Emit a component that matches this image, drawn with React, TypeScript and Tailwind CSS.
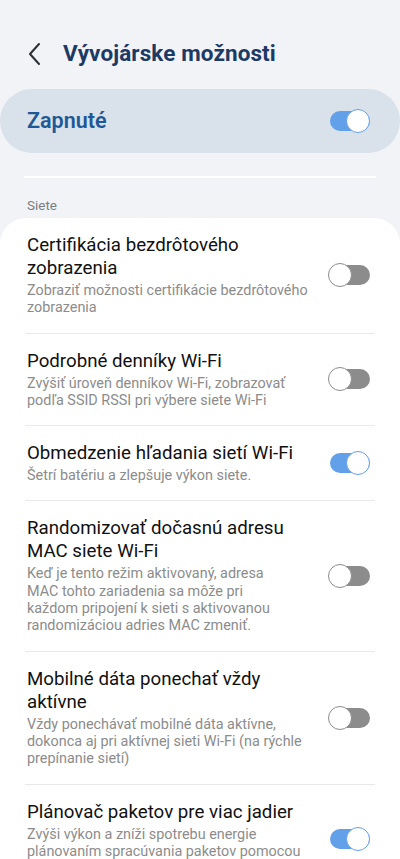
import React from "react";

type Item = { title: string; sub: string[]; on: boolean };

const items: Item[] = [
  {
    title: "Certifikácia bezdrôtového zobrazenia",
    sub: ["Zobraziť možnosti certifikácie bezdrôtového", "zobrazenia"],
    on: false,
  },
  {
    title: "Podrobné denníky Wi-Fi",
    sub: ["Zvýšiť úroveň denníkov Wi-Fi, zobrazovať", "podľa SSID RSSI pri výbere siete Wi-Fi"],
    on: false,
  },
  {
    title: "Obmedzenie hľadania sietí Wi-Fi",
    sub: ["Šetrí batériu a zlepšuje výkon siete."],
    on: true,
  },
  {
    title: "Randomizovať dočasnú adresu MAC siete Wi-Fi",
    sub: [
      "Keď je tento režim aktivovaný, adresa",
      "MAC tohto zariadenia sa môže pri",
      "každom pripojení k sieti s aktivovanou",
      "randomizáciou adries MAC zmeniť.",
    ],
    on: false,
  },
  {
    title: "Mobilné dáta ponechať vždy aktívne",
    sub: [
      "Vždy ponechávať mobilné dáta aktívne,",
      "dokonca aj pri aktívnej sieti Wi-Fi (na rýchle",
      "prepínanie sietí)",
    ],
    on: false,
  },
  {
    title: "Plánovač paketov pre viac jadier",
    sub: [
      "Zvýši výkon a zníži spotrebu energie",
      "plánovaním spracúvania paketov pomocou",
      "viacerých jadier",
    ],
    on: true,
  },
];

function Toggle({ on }: { on: boolean }) {
  return (
    <div className="relative w-[42px] h-[24px] flex items-center shrink-0">
      <div
        className={
          "absolute left-[2px] right-0 h-[20px] rounded-full " +
          (on ? "bg-[#63a0ea]" : "bg-[#8c8c8c]")
        }
      />
      <div
        className={
          "absolute top-0 w-[24px] h-[24px] rounded-full bg-white border-[1.5px] " +
          (on ? "right-0 border-[#63a0ea]" : "left-0 border-[#8c8c8c]")
        }
      />
    </div>
  );
}

export default function App() {
  return (
    <div
      className="w-[400px] h-[859px] overflow-hidden bg-[#f2f3f7]"
      style={{ fontFamily: "Roboto, 'Noto Sans', sans-serif" }}
    >
      <div className="h-[34px]" />
      <div className="flex items-center h-[40px] pl-[27px]">
        <svg width="16" height="24" viewBox="0 0 16 24" className="shrink-0">
          <path d="M12 2 L3 12 L12 22" fill="none" stroke="#2b2f36" strokeWidth="2" strokeLinecap="round" strokeLinejoin="round" />
        </svg>
        <div className="ml-[20px] text-[22.5px] font-bold text-[#1c3a63] tracking-[0.1px]">
          Vývojárske možnosti
        </div>
      </div>
      <div className="h-[15px]" />
      <div className="h-[64px] rounded-full bg-[#d9e1ea] flex items-center justify-between pl-[27px] pr-[30px]">
        <div className="text-[21.5px] font-semibold text-[#1f5896]">Zapnuté</div>
        <Toggle on={true} />
      </div>
      <div className="mx-[24px] mt-[23px] h-[2px] bg-white" />
      <div className="pl-[27px] pt-[17px] h-[40px] text-[13.5px] text-[#7a7d82]">Siete</div>
      <div className="bg-white rounded-[26px] px-[27px]">
        {items.map((it, i) => (
          <div key={i}>
            {i > 0 && <div className="h-[1px] bg-[#e9e9e9] -mx-[2px]" />}
            <div className="flex items-center justify-between py-[16px]">
              <div className="w-[284px]">
                <div className="text-[18.7px] leading-[23px] text-[#111111]">{it.title}</div>
                <div className="mt-[2px] text-[14.4px] leading-[17.3px] text-[#8c8c8c]">
                  {it.sub.map((l, j) => (
                    <div key={j} className="whitespace-nowrap">
                      {l}
                    </div>
                  ))}
                </div>
              </div>
              <div className="mr-[3px]">
                <Toggle on={it.on} />
              </div>
            </div>
          </div>
        ))}
      </div>
    </div>
  );
}
